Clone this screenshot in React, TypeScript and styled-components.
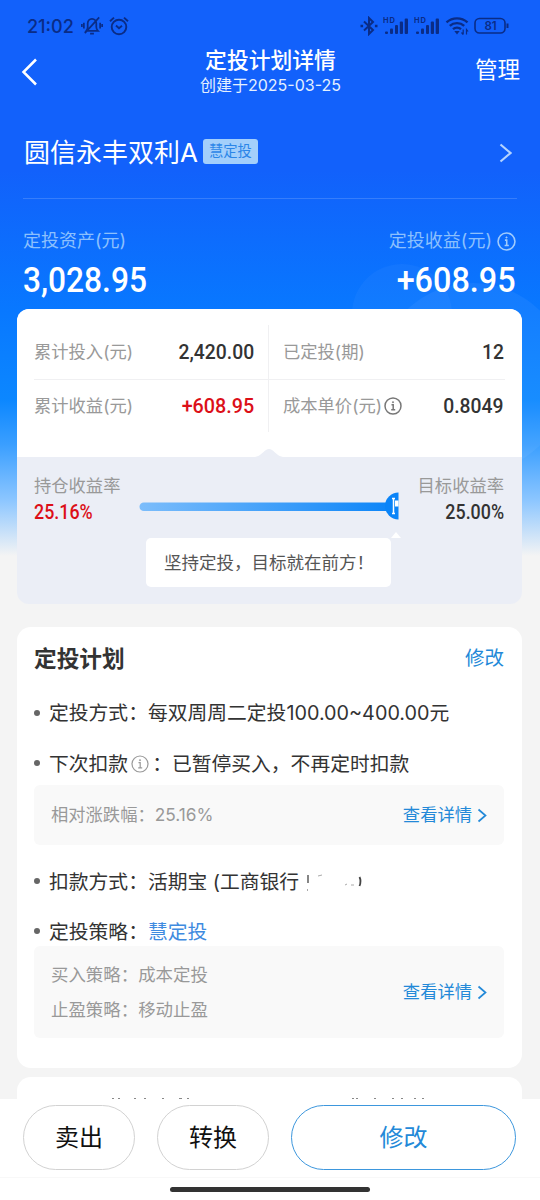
import React from 'react';
import styled, { createGlobalStyle } from 'styled-components';

const Global = createGlobalStyle`
  * { box-sizing: border-box; }
  body { margin: 0; background: #f4f4f4; }
  #root { font-family: Inter, "Noto Sans CJK SC", sans-serif; }
  svg { display: block; flex: none; }
`;

const Phone = styled.div`
  position: relative;
  width: 540px;
  height: 1200px;
  overflow: hidden;
  display: flex;
  flex-direction: column;
  background: linear-gradient(180deg, #1261fb 0, #1261fb 170px, #0878ff 310px, #0c87ff 400px, #3b9fff 445px, #8cc6ff 500px, #f4f4f4 556px);
`;

const Glow = styled.svg`
  position: absolute;
  left: 0;
  top: 0;
`;

const Text = styled.span<{ $size: number; $color?: string; $weight?: number; $sx?: number; $from?: string }>`
  display: inline-block;
  flex: none;
  white-space: pre;
  line-height: 1.4;
  font-size: ${p => p.$size}px;
  color: ${p => p.$color || '#333'};
  font-weight: ${p => p.$weight || 400};
  transform: scaleX(${p => p.$sx || 1});
  transform-origin: ${p => p.$from || 'left'} center;
`;

const Num = styled(Text)`
  font-family: Roboto, sans-serif;
`;

const StatusBar = styled.div`
  position: relative;
  height: 45px;
  padding: 7px 31px 0 27px;
  display: flex;
  align-items: center;
  justify-content: space-between;
`;

const Cluster = styled.div<{ $gap?: number }>`
  display: flex;
  align-items: center;
  gap: ${p => p.$gap || 0}px;
`;

const NavBar = styled.div`
  position: relative;
  height: 50px;
  padding: 0 20px 0 21px;
  display: grid;
  grid-template-columns: 60px 1fr 60px;
  align-items: center;
`;

const Back = styled.div`
  padding-bottom: 1px;
`;

const NavTitle = styled.div`
  display: flex;
  flex-direction: column;
  align-items: center;
  padding-bottom: 4px;
`;

const Created = styled.div`
  margin-top: -2px;
`;

const NavAction = styled.div`
  display: flex;
  justify-content: flex-end;
  padding-bottom: 5px;
`;

const FundRow = styled.div`
  position: relative;
  margin: 0 23px;
  height: 104px;
  padding: 12px 5px 0 1px;
  display: flex;
  align-items: center;
  justify-content: space-between;
  border-bottom: 1px solid rgba(255, 255, 255, 0.16);
`;

const FundName = styled.div`
  padding-top: 2px;
`;

const Tag = styled.div`
  width: 55px;
  height: 25px;
  margin-bottom: 2px;
  border-radius: 3px;
  background: #a3cffb;
  display: flex;
  align-items: center;
  justify-content: center;
`;

const Summary = styled.div`
  position: relative;
  height: 110px;
  padding: 29px 24px 0 23px;
  display: flex;
  justify-content: space-between;
`;

const SummaryCol = styled.div<{ $right?: boolean }>`
  display: flex;
  flex-direction: column;
  align-items: ${p => (p.$right ? 'flex-end' : 'flex-start')};
`;

const SummaryLabel = styled.div`
  display: flex;
  align-items: center;
  gap: 5px;
  height: 26px;
`;

const SummaryValue = styled.div`
  display: flex;
  align-items: center;
  height: 52px;
`;

const AssetCard = styled.section`
  position: relative;
  margin: 0 18px 0 17px;
  height: 295px;
  border-radius: 12px;
  overflow: hidden;
  background: #ebeef6;
`;

const Stats = styled.div`
  position: relative;
  height: 148px;
  padding: 16px 17px 0 17px;
  background: #fff;
  display: grid;
  grid-template-columns: 235px 1fr;
  grid-template-rows: 55px 52px;
`;

const Stat = styled.div<{ $top?: boolean; $left?: boolean }>`
  display: flex;
  align-items: center;
  justify-content: space-between;
  padding: ${p => (p.$left ? '1px 14px 0 0' : '1px 1px 0 14px')};
  border-bottom: ${p => (p.$top ? '1px solid #f0f0f2' : '0')};
  border-right: ${p => (p.$left ? '1px solid #f0f0f2' : '0')};
`;

const Notch = styled.svg`
  position: absolute;
  left: 238px;
  bottom: 0;
`;

const Progress = styled.div`
  height: 147px;
  padding: 15px 18px 0 17px;
`;

const ProgressRow = styled.div`
  display: flex;
  justify-content: space-between;
`;

const Rate = styled.div<{ $right?: boolean }>`
  display: flex;
  flex-direction: column;
  align-items: ${p => (p.$right ? 'flex-end' : 'flex-start')};
  width: 100px;
  height: 58px;
  padding-top: 2px;
`;

const Track = styled.div`
  flex: 1;
  display: flex;
  align-items: flex-start;
  padding: 20px 0 0 5px;
`;

const Tip = styled.div`
  position: relative;
  width: 245px;
  height: 49px;
  margin: 8px 0 0 112px;
  border-radius: 5px;
  background: #fff;
  display: flex;
  align-items: center;
  padding: 2px 0 0 18px;
`;

const TipArrow = styled.svg`
  position: absolute;
  left: 244px;
  top: -6px;
`;

const PlanCard = styled.section`
  position: relative;
  margin: 23px 18px 0 17px;
  height: 441px;
  border-radius: 14px;
  background: #fff;
  padding: 9px 18px 0 17px;
`;

const CardHead = styled.div`
  height: 46px;
  display: flex;
  align-items: center;
  justify-content: space-between;
`;

const Item = styled.div<{ $h: number; $pt?: number }>`
  height: ${p => p.$h}px;
  padding-top: ${p => p.$pt || 0}px;
  display: flex;
  align-items: center;
`;

const Dot = styled.i`
  width: 6px;
  height: 6px;
  border-radius: 50%;
  background: #666;
  margin: 0 9px 3px 0;
`;

const InlineInfo = styled.span`
  display: flex;
  margin: 0 3px 2px 3px;
`;

const Panel = styled.div<{ $h: number }>`
  height: ${p => p.$h}px;
  border-radius: 6px;
  background: #f9f9f9;
  display: flex;
  align-items: center;
  justify-content: space-between;
  padding: 1px 17px 0;
`;

const Lines = styled.div`
  display: flex;
  flex-direction: column;
  gap: 10px;
`;

const NextCard = styled.section`
  margin: 9px 18px 0 17px;
  height: 80px;
  border-radius: 14px;
  background: #fff;
  padding: 20px 0 0 94px;
`;

const BottomBar = styled.footer`
  position: absolute;
  left: 0;
  right: 0;
  bottom: 0;
  height: 101px;
  background: #fff;
`;

const Buttons = styled.div`
  height: 79px;
  padding: 6px 24px 0 23px;
  display: grid;
  grid-template-columns: 112px 112px 1fr;
  grid-template-rows: 65px;
  column-gap: 22px;
  border-bottom: 1px solid #f8f8f8;
`;

const Pill = styled.button<{ $primary?: boolean }>`
  border: 1px solid ${p => (p.$primary ? '#3d97dd' : '#d2d2d2')};
  border-radius: 33px;
  background: #fff;
  padding: 0;
  font-family: inherit;
  display: flex;
  align-items: center;
  justify-content: center;
`;

const HomeBar = styled.div`
  width: 200px;
  height: 5px;
  border-radius: 3px;
  background: #333;
  margin: 9px 0 0 170px;
`;

const NAVY = '#0a2c86';

const Info = ({ size, color, w = 1.5 }: { size: number; color: string; w?: number }) => (
  <svg width={size} height={size} viewBox="0 0 18 18" fill="none" stroke={color} strokeWidth={w}>
    <circle cx="9" cy="9" r="8" />
    <path d="M7.5 7.7h1.700v5M7.200 12.800h4" />
    <circle cx="9" cy="5.2" r="0.6" fill={color} strokeWidth="0.8" />
  </svg>
);

const Chevron = ({ w, h, color, sw }: { w: number; h: number; color: string; sw: number }) => (
  <svg width={w} height={h} fill="none" stroke={color} strokeWidth={sw}>
    <path d={`M1.5 1.5L${w - 1.5} ${h / 2}L1.5 ${h - 1.5}`} />
  </svg>
);

const Muted = () => (
  <svg width="22" height="20" viewBox="0 0 23 20" fill="none" stroke={NAVY} strokeWidth="1.8">
    <path d="M5.5 15h12.2c-1.2-1.2-1.7-2-1.7-4V7.500c0-3-2-5-4.500-5S7 4.500 7 7.500V11c0 2-.5 2.800-1.500 4zM9.500 18h4M19 1L4 17.500M3 6.500v6M.9 8v3M20 6.500v6M22.100 8v3" />
  </svg>
);

const Alarm = () => (
  <svg width="20" height="20" viewBox="0 0 20 20" fill="none" stroke={NAVY} strokeWidth="1.9">
    <circle cx="10" cy="11" r="7.300" />
    <path d="M1 5.300L5 1.600M19 5.300L15 1.600M7 9.500l3 2.700 3-2.500" />
  </svg>
);

const Bluetooth = () => (
  <svg width="18" height="20" viewBox="0 0 18 20" fill="none" stroke={NAVY} strokeWidth="2">
    <path d="M4 5.500l9 8.500L9 18V2l4 4L4 14.500" />
    <path d="M0.500 10h2.600M14.900 10h2.600" strokeWidth="2.600" />
  </svg>
);

const Signal = () => (
  <svg width="26" height="20" viewBox="0 0 26 20" fill={NAVY}>
    <text x="0" y="7" fontSize="7.500" fontWeight="700" fontFamily="Inter, sans-serif" textLength="12">HD</text>
    <rect x="2" y="15.500" width="3" height="2.500" rx="1" />
    <rect x="7" y="12.500" width="3" height="5.500" rx="1" />
    <rect x="12" y="9" width="3" height="9" rx="1" />
    <rect x="16.800" y="5.500" width="3.200" height="12.500" rx="1" />
    <rect x="21.700" y="2.500" width="3.300" height="15.500" rx="1" />
  </svg>
);

const Wifi = () => (
  <svg width="24" height="20" viewBox="0 0 24 20" fill="none" stroke={NAVY} strokeWidth="2.400">
    <path d="M1.500 6.300c6-5.300 15-5.300 21 0M4.800 9.800c4-3.600 10.400-3.600 14.400 0M8 13.200c2.300-2 5.700-2 8 0" />
    <path d="M9.300 15h5.400L12 18.500z" fill={NAVY} stroke="none" />
    <path d="M18.200 13.500v5M16.500 16.500l1.700 2M21.500 18.500v-5l1.600 2" strokeWidth="1.200" />
  </svg>
);

const Battery = () => (
  <svg width="35" height="18" viewBox="0 0 35 18" fill="none" stroke={NAVY} strokeWidth="1.600">
    <rect x="1" y="1.500" width="30" height="14.500" rx="4.500" />
    <path d="M33.500 6.500v4.500" strokeWidth="2" />
    <text x="10.500" y="13" fontSize="11.500" fontWeight="600" fontFamily="Inter, sans-serif" fill={NAVY} stroke="none" textLength="12">81</text>
  </svg>
);

const Detail = () => (
  <Cluster $gap={5}>
    <Text $size={17.3} $color="#2389d8">查看详情</Text>
    <Chevron w={10} h={15} color="#2389d8" sw={1.7} />
  </Cluster>
);

export default function App() {
  return (
    <Phone>
      <Global />
      <Glow width="540" height="560" fill="#fff">
        <circle cx="402" cy="314" r="50" fillOpacity="0.035" />
        <circle cx="473" cy="378" r="95" fillOpacity="0.05" />
      </Glow>

      <StatusBar>
        <Cluster $gap={6}>
          <Text $size={18.6} $color={NAVY} $weight={500} $sx={0.97}>21:02</Text>
          <Muted />
          <Alarm />
        </Cluster>
        <Cluster $gap={5}>
          <Bluetooth />
          <Signal />
          <Signal />
          <Wifi />
          <Battery />
        </Cluster>
      </StatusBar>

      <NavBar>
        <Back>
          <svg width="17" height="28" fill="none" stroke="#fff" strokeWidth="2.5">
            <path d="M15 1.500L2.500 14 15 26.500" />
          </svg>
        </Back>
        <NavTitle>
          <Text $size={21.8} $color="#fff" $weight={500}>定投计划详情</Text>
          <Created><Text $size={16} $color="#e4f0ff">创建于2025-03-25</Text></Created>
        </NavTitle>
        <NavAction><Text $size={22.500} $color="#fff">管理</Text></NavAction>
      </NavBar>

      <FundRow>
        <Cluster $gap={5}>
          <FundName><Text $size={26} $color="#fff">圆信永丰双利A</Text></FundName>
          <Tag><Text $size={14.300} $color="#2b86e8">慧定投</Text></Tag>
        </Cluster>
        <Chevron w={13} h={20} color="#b4d3ff" sw={2.2} />
      </FundRow>

      <Summary>
        <SummaryCol>
          <SummaryLabel><Text $size={18} $color="#8cc0fd">定投资产(元)</Text></SummaryLabel>
          <SummaryValue><Num $size={35} $color="#fff" $weight={500} $sx={0.905}>3,028.95</Num></SummaryValue>
        </SummaryCol>
        <SummaryCol $right>
          <SummaryLabel>
            <Text $size={18} $color="#8cc0fd">定投收益(元)</Text>
            <Info size={19} color="#a0cbfd" />
          </SummaryLabel>
          <SummaryValue><Num $size={35} $color="#fff" $weight={500} $sx={0.925} $from="right">+608.95</Num></SummaryValue>
        </SummaryCol>
      </Summary>

      <AssetCard>
        <Stats>
          <Stat $top $left>
            <Text $size={17.300} $color="#999">累计投入(元)</Text>
            <Num $size={21} $weight={500} $sx={0.92} $from="right">2,420.00</Num>
          </Stat>
          <Stat $top>
            <Text $size={17.300} $color="#999">已定投(期)</Text>
            <Num $size={21} $weight={500} $sx={0.92} $from="right">12</Num>
          </Stat>
          <Stat $left>
            <Text $size={17.300} $color="#999">累计收益(元)</Text>
            <Num $size={21} $weight={500} $sx={0.94} $from="right" $color="#dc0f18">+608.95</Num>
          </Stat>
          <Stat>
            <Cluster $gap={2}>
              <Text $size={17.300} $color="#999">成本单价(元)</Text>
              <Info size={18} color="#777" />
            </Cluster>
            <Num $size={21} $weight={500} $sx={0.92} $from="right">0.8049</Num>
          </Stat>
          <Notch width="28" height="9" fill="#ebeef6"><path d="M0 9C5 8 7 5 11 2Q14 0 17 2C21 5 23 8 28 9z" /></Notch>
        </Stats>
        <Progress>
          <ProgressRow>
            <Rate>
              <Text $size={17.300} $color="#999">持仓收益率</Text>
              <Num $size={21} $weight={500} $sx={0.85} $color="#dc0f18">25.16%</Num>
            </Rate>
            <Track>
              <svg width="260" height="28">
                <defs>
                  <linearGradient id="bar" x1="0" x2="1"><stop offset="0" stopColor="#7cbdfb" /><stop offset="1" stopColor="#0a84f8" /></linearGradient>
                </defs>
                <rect x="0.500" y="10.500" width="256" height="8.500" rx="4.250" fill="url(#bar)" />
                <path d="M259.500 0.500a13.500 13.500 0 0 0 0 27z" fill="#0a84f8" />
                <path d="M254.500 6.500v15M253 6.500h3M253 21.500h3" stroke="#fff" strokeWidth="1.500" />
                <path d="M256 8.500h3.500v6h-3.500z" fill="#fff" />
              </svg>
            </Track>
            <Rate $right>
              <Text $size={17.300} $color="#999">目标收益率</Text>
              <Num $size={21} $weight={500} $sx={0.85} $from="right">25.00%</Num>
            </Rate>
          </ProgressRow>
          <Tip>
            <Text $size={17.500} $color="#555">坚持定投，目标就在前方！</Text>
            <TipArrow width="12" height="6" fill="#fff"><path d="M1 6L6 0l5 6z" /></TipArrow>
          </Tip>
        </Progress>
      </AssetCard>

      <PlanCard>
        <CardHead>
          <Text $size={22.700} $weight={700}>定投计划</Text>
          <Text $size={19.500} $color="#2389d8">修改</Text>
        </CardHead>
        <Item $h={62} $pt={2}>
          <Dot />
          <Text $size={19.800}>定投方式：每双周周二定投100.00~400.00元</Text>
        </Item>
        <Item $h={41}>
          <Dot />
          <Text $size={19.800}>下次扣款</Text>
          <InlineInfo><Info size={18} color="#999" w={1.200} /></InlineInfo>
          <Text $size={19.800}>：已暂停买入，不再定时扣款</Text>
        </Item>
        <Panel $h={60}>
          <Text $size={17.300} $color="#999">相对涨跌幅：25.16%</Text>
          <Detail />
        </Panel>
        <Item $h={74} $pt={1}>
          <Dot />
          <Text $size={19.800}>扣款方式：活期宝 (工商银行</Text>
          <svg width="64" height="24" fill="none" stroke="#444" strokeWidth="1.300">
            <path d="M9 4v8" />
            <path d="M8.500 18v2M19 5l4-1M46 14l2-1M52 14h3" stroke="#aaa" strokeWidth="1" />
            <path d="M60.500 6q2 4 0 9" strokeWidth="1.800" />
          </svg>
        </Item>
        <Item $h={27}>
          <Dot />
          <Text $size={19.800}>定投策略：</Text>
          <Text $size={19.800} $color="#3f8be0">慧定投</Text>
        </Item>
        <Panel $h={92}>
          <Lines>
            <Text $size={17.450} $color="#999">买入策略：成本定投</Text>
            <Text $size={17.450} $color="#999">止盈策略：移动止盈</Text>
          </Lines>
          <Detail />
        </Panel>
      </PlanCard>

      <NextCard>
        <svg width="330" height="3" fill="none" stroke="#888" strokeWidth="1">
          <path d="M1 1.500h2M7 1.500h2M23 1.500h2M33 1.500h2M51 1.500h2M68 1.500h3M76 1.500h2M241 1.500h2M245 1.500h2M263 1.500h2M281 1.500h2M290 1.500h2M303 1.500h2M311 1.500h2" />
        </svg>
      </NextCard>

      <BottomBar>
        <Buttons>
          <Pill><Text $size={24} $color="#111">卖出</Text></Pill>
          <Pill><Text $size={24} $color="#111">转换</Text></Pill>
          <Pill $primary><Text $size={24} $color="#2389d8">修改</Text></Pill>
        </Buttons>
        <HomeBar />
      </BottomBar>
    </Phone>
  );
}
